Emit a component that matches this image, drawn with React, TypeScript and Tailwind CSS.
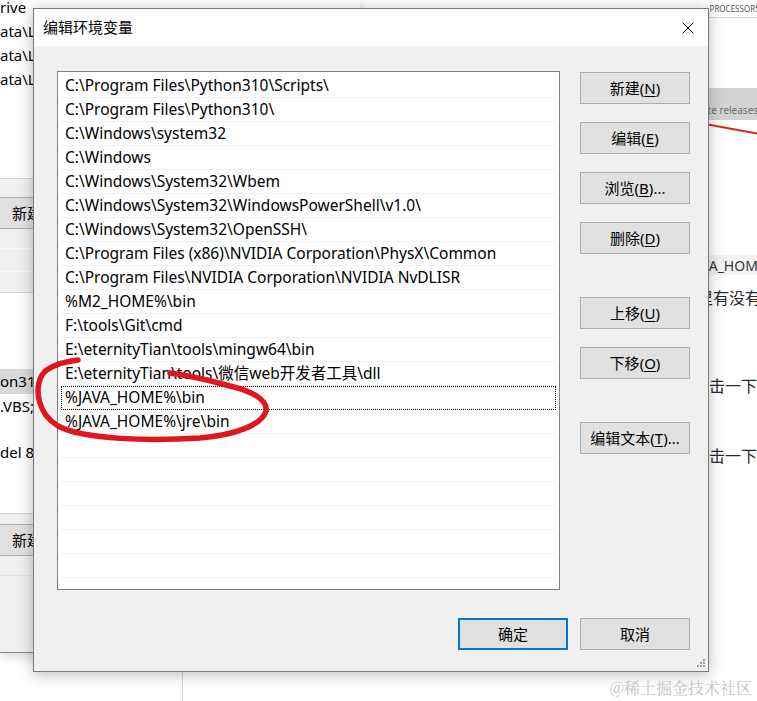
import type { ReactNode } from "react";

const paths = [
  "C:\\Program Files\\Python310\\Scripts\\",
  "C:\\Program Files\\Python310\\",
  "C:\\Windows\\system32",
  "C:\\Windows",
  "C:\\Windows\\System32\\Wbem",
  "C:\\Windows\\System32\\WindowsPowerShell\\v1.0\\",
  "C:\\Windows\\System32\\OpenSSH\\",
  "C:\\Program Files (x86)\\NVIDIA Corporation\\PhysX\\Common",
  "C:\\Program Files\\NVIDIA Corporation\\NVIDIA NvDLISR",
  "%M2_HOME%\\bin",
  "F:\\tools\\Git\\cmd",
  "E:\\eternityTian\\tools\\mingw64\\bin",
  "E:\\eternityTian\\tools\\微信web开发者工具\\dll",
  "%JAVA_HOME%\\bin",
  "%JAVA_HOME%\\jre\\bin",
  "", "", "", "", "", "", "",
];

function Btn({ children, primary }: { children: ReactNode; primary?: boolean }) {
  return (
    <div
      className={
        "flex h-[32px] w-[110px] items-center justify-center bg-[#e1e1e1] text-[15px] text-black " +
        (primary ? "border-2 border-[#0078d7]" : "border border-[#adadad]")
      }
    >
      {children}
    </div>
  );
}

function Acc({ label, k, tail }: { label: string; k: string; tail?: string }) {
  return (
    <span>
      {label}(<span className="underline underline-offset-2">{k}</span>){tail}
    </span>
  );
}

function LeftWindow() {
  return (
    <div className="absolute left-0 top-0 flex h-[653px] w-[360px] flex-col border-b border-[#8a8a8a] bg-[#f0f0f0] text-[15px] shadow-[0_4px_10px_rgba(0,0,0,0.15)]">
      <div className="flex h-[179px] flex-col overflow-hidden border-b border-[#d4d4d4] bg-white">
        <div className="mt-[-5px] flex h-[24px] items-center">rive</div>
        <div className="flex h-[24px] items-center">ata\L</div>
        <div className="flex h-[24px] items-center">ata\L</div>
        <div className="flex h-[24px] items-center">ata\L</div>
      </div>
      <div className="h-[18px]" />
      <div className="ml-[-1px] flex h-[32px] w-[110px] items-center border border-[#adadad] bg-[#e1e1e1] pl-[12px]">新建</div>
      <div className="h-[20px] border-b border-[#f9f9f9]" />
      <div className="h-[23px] border-b border-[#f9f9f9]" />
      <div className="h-[20px]" />
      <div className="flex h-[222px] flex-col overflow-hidden border-y border-[#d4d4d4] bg-white pt-[52px]">
        <div className="h-[24px]" />
        <div className="flex h-[25px] items-center bg-[#d9d9d9]">on31</div>
        <div className="flex h-[24px] items-center">.VBS;</div>
        <div className="h-[22px]" />
        <div className="flex h-[24px] items-center">del 8</div>
      </div>
      <div className="h-[10px]" />
      <div className="ml-[-1px] flex h-[32px] w-[110px] items-center border border-[#adadad] bg-[#e1e1e1] pl-[12px]">新建</div>
      <div className="h-[20px] border-b border-[#e3e3e3]" />
    </div>
  );
}

function RightWindow() {
  return (
    <div className="absolute bottom-0 left-[600px] right-0 top-0 flex flex-col bg-white">
      <div className="flex h-[18px] items-center whitespace-nowrap border-b border-[#d6d6d6] pl-[106px] text-[8px] leading-none text-[#555]">_PROCESSORS</div>
      <div className="h-[70px]" />
      <div className="flex h-[32px] items-center whitespace-nowrap bg-[#d3d3d3] pl-[102px] pt-[12px] text-[10px] text-[#6f6f6f]">ate releases to</div>
      <svg className="h-[20px] w-[157px] shrink-0" viewBox="0 0 157 20">
        <line x1="105" y1="4" x2="160" y2="14" stroke="#d9262c" strokeWidth="2" />
      </svg>
      <div className="h-[115px]" />
      <div className="flex h-[20px] items-center whitespace-nowrap bg-[#f3f3f3] pl-[77px] text-[14px] text-[#333]">%JAVA_HOME%</div>
      <div className="h-[12px]" />
      <div className="flex h-[22px] items-center whitespace-nowrap pl-[81px] text-[16px] text-[#252933]">看里有没有</div>
      <div className="h-[66px]" />
      <div className="flex h-[22px] items-center whitespace-nowrap pl-[93px] text-[16px] text-[#252933]">点击一下</div>
      <div className="h-[48px]" />
      <div className="flex h-[22px] items-center whitespace-nowrap pl-[93px] text-[16px] text-[#252933]">点击一下</div>
    </div>
  );
}

function Dialog() {
  return (
    <div className="absolute left-[33px] top-[8px] flex h-[664px] w-[676px] flex-col border border-[#7a7a7a] bg-[#f0f0f0] shadow-[0_2px_14px_rgba(0,0,0,0.28)]">
      <div className="flex h-[37px] items-center justify-between bg-white pl-[9px] pr-[14px]">
        <span className="text-[15px] text-black">编辑环境变量</span>
        <svg width="12" height="12" viewBox="0 0 12 12">
          <path d="M0.5 0.5 L11.5 11.5 M11.5 0.5 L0.5 11.5" stroke="#000" strokeWidth="1" />
        </svg>
      </div>
      <div className="flex flex-1 flex-col pl-[23px] pr-[18px] pt-[25px]">
        <div className="flex gap-[20px]">
          <div className="flex h-[519px] w-[503px] flex-col overflow-hidden border border-[#828282] bg-white px-[3px] pt-[2px] text-[15.5px] text-black">
            {paths.map((p, i) => (
              <div
                key={i}
                className={
                  "flex h-[24px] shrink-0 items-center whitespace-nowrap border-b border-[#f0f0f0] pl-[4px] " +
                  (i === 13 ? "outline outline-1 outline-dotted outline-offset-[-1px] outline-black" : "")
                }
              >
                {p}
              </div>
            ))}
          </div>
          <div className="flex flex-col pt-[1px]">
            <Btn><Acc label="新建" k="N" /></Btn>
            <div className="h-[18px]" />
            <Btn><Acc label="编辑" k="E" /></Btn>
            <div className="h-[18px]" />
            <Btn><Acc label="浏览" k="B" tail="..." /></Btn>
            <div className="h-[18px]" />
            <Btn><Acc label="删除" k="D" /></Btn>
            <div className="h-[43px]" />
            <Btn><Acc label="上移" k="U" /></Btn>
            <div className="h-[18px]" />
            <Btn><Acc label="下移" k="O" /></Btn>
            <div className="h-[43px]" />
            <Btn><Acc label="编辑文本" k="T" tail="..." /></Btn>
          </div>
        </div>
        <div className="mt-[28px] flex justify-end gap-[12px]">
          <Btn primary>确定</Btn>
          <Btn>取消</Btn>
        </div>
      </div>
      <svg className="absolute bottom-[3px] right-[3px]" width="10" height="10" viewBox="0 0 10 10">
        {[
          [8, 0], [8, 3], [5, 3], [8, 6], [5, 6], [2, 6],
        ].map(([x, y], i) => (
          <rect key={i} x={x} y={y + 1} width="2" height="2" fill="#a0a0a0" />
        ))}
      </svg>
    </div>
  );
}

export default function App() {
  return (
    <div className='relative h-[701px] w-[757px] overflow-hidden bg-white font-[family-name:"Noto_Sans","Noto_Sans_CJK_SC",sans-serif]'>
      <div className="absolute bottom-0 left-[182px] top-[672px] w-px bg-[#d4d4d4]" />
      <LeftWindow />
      <RightWindow />
      <Dialog />
      <svg className="pointer-events-none absolute left-0 top-0" width="757" height="701" viewBox="0 0 757 701">
        <path
          d="M 78 360 C 62 362, 48 366, 42 375 C 34 390, 38 414, 58 426 C 85 440, 150 441, 200 438 C 235 435, 262 425, 266 411 C 268 400, 252 391, 230 386 C 212 381, 192 376, 170 373"
          fill="none"
          stroke="#e0161e"
          strokeWidth="5.5"
          strokeLinecap="round"
        />
      </svg>
      <div className='absolute bottom-[5px] right-[5px] font-[family-name:"Noto_Serif_CJK_SC","Liberation_Serif",serif] text-[16px] leading-none text-[#c4c4c4]'>
        @稀土掘金技术社区
      </div>
    </div>
  );
}
